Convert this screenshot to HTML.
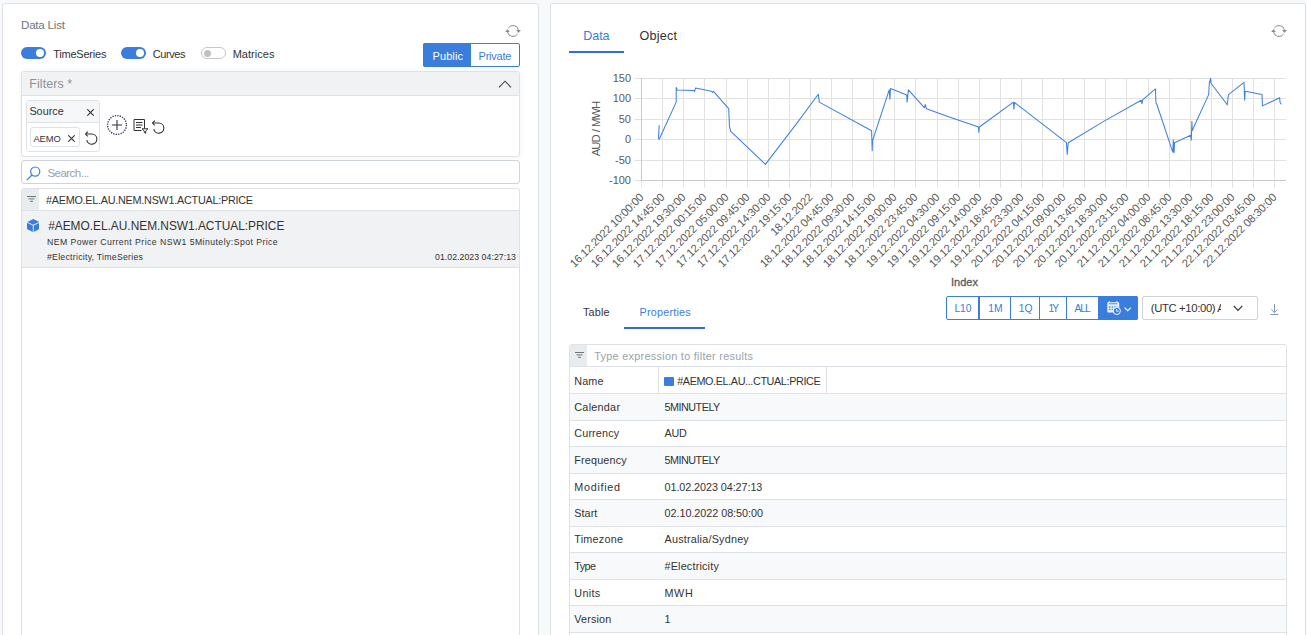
<!DOCTYPE html>
<html><head><meta charset="utf-8"><title>Data List</title>
<style>
html,body{margin:0;padding:0}
body{width:1307px;height:635px;overflow:hidden;background:#f8f9fa;font-family:"Liberation Sans",sans-serif;position:relative}
.b{position:absolute;display:block}
.t{position:absolute;white-space:nowrap}
</style></head><body>
<div class="b" style="left:2px;top:3px;width:537px;height:640px;background:#fff;border:1px solid #dee2e6;border-radius:3px;box-sizing:border-box;"></div>
<div class="b" style="left:550px;top:3px;width:756px;height:640px;background:#fff;border:1px solid #dee2e6;border-radius:3px;box-sizing:border-box;"></div>
<span class="t" style="top:16.00px;font-size:11.6px;line-height:18px;color:#6c757d;letter-spacing:-0.224px;left:21.00px;">Data List</span>
<svg class="b" style="left:503.6px;top:21.85px" width="18" height="18" viewBox="-9 -9 18 18" fill="none" stroke="#868c96" stroke-width="1"><path d="M-4.6 -3.0A5.5 5.5 0 0 1 5.45 -0.8"/><path d="M4.6 3.0A5.5 5.5 0 0 1 -5.45 0.8"/><path d="M3.2 -0.9H7.8L5.5 1.9Z" fill="#868c96" stroke="none"/><path d="M-3.2 0.9H-7.8L-5.5 -1.9Z" fill="#868c96" stroke="none"/></svg>
<div class="b" style="left:21px;top:47px;width:25px;height:12px;background:#3b7ddd;border-radius:6px;"></div>
<div class="b" style="left:36px;top:49px;width:8px;height:8px;background:#fff;border-radius:50%;"></div>
<span class="t" style="top:45.00px;font-size:11px;line-height:18px;color:#333;letter-spacing:-0.224px;left:53.20px;">TimeSeries</span>
<div class="b" style="left:121px;top:47px;width:25px;height:12px;background:#3b7ddd;border-radius:6px;"></div>
<div class="b" style="left:136px;top:49px;width:8px;height:8px;background:#fff;border-radius:50%;"></div>
<span class="t" style="top:45.00px;font-size:11px;line-height:18px;color:#333;letter-spacing:-0.448px;left:152.80px;">Curves</span>
<div class="b" style="left:201px;top:47px;width:25px;height:12px;background:#fff;border:1px solid #c4c8cc;border-radius:6px;box-sizing:border-box;"></div>
<div class="b" style="left:203.5px;top:49.5px;width:7px;height:7px;background:#c0c0c0;border-radius:50%;"></div>
<span class="t" style="top:45.00px;font-size:11px;line-height:18px;color:#333;letter-spacing:0.021px;left:232.70px;">Matrices</span>
<div class="b" style="left:423px;top:43px;width:97px;height:24px;background:#fff;border:1px solid #3b7ddd;border-radius:2px;box-sizing:border-box;"></div>
<div class="b" style="left:423px;top:43px;width:48px;height:24px;background:#3b7ddd;border-radius:2px 0 0 2px;"></div>
<span class="t" style="top:47.00px;font-size:11px;line-height:18px;color:#fff;letter-spacing:0.090px;left:432.50px;">Public</span>
<span class="t" style="top:47.00px;font-size:11px;line-height:18px;color:#3b7ddd;letter-spacing:-0.240px;left:478.60px;">Private</span>
<div class="b" style="left:21px;top:71px;width:499px;height:86px;background:#fff;border:1px solid #dee2e6;border-radius:3px;box-sizing:border-box;box-shadow:0 0 6px rgba(0,0,0,.06);"></div>
<div class="b" style="left:22px;top:72px;width:497px;height:23px;background:#f1f2f4;border-bottom:1px solid #dee2e6;border-radius:2px 2px 0 0;"></div>
<span class="t" style="top:74.00px;font-size:12.4px;line-height:20px;color:#8c929a;letter-spacing:0.095px;left:29.30px;">Filters *</span>
<svg class="b" style="left:498px;top:79px" width="14" height="10" viewBox="0 0 14 10" fill="none" stroke="#444" stroke-width="1.1"><path d="M1 8.3L7 2.2L13 8.3"/></svg>
<div class="b" style="left:26px;top:100px;width:74px;height:52px;background:#fff;border:1px solid #dee2e6;border-radius:3px;box-sizing:border-box;"></div>
<div class="b" style="left:27px;top:101px;width:72px;height:21px;background:#f6f7f8;border-bottom:1px solid #dee2e6;border-radius:2px 2px 0 0;"></div>
<span class="t" style="top:102.00px;font-size:10.8px;line-height:18px;color:#333;letter-spacing:0.018px;left:29.40px;">Source</span>
<svg class="b" style="left:86.6px;top:108.5px" width="7" height="7" viewBox="0 0 7 7" stroke="#333" stroke-width="1.1"><path d="M0.3 0.3L6.7 6.7M6.7 0.3L0.3 6.7"/></svg>
<div class="b" style="left:30px;top:127px;width:50px;height:20px;background:#fff;border:1px solid #dee2e6;border-radius:3px;box-sizing:border-box;"></div>
<span class="t" style="top:130.00px;font-size:9.4px;line-height:17px;color:#333;letter-spacing:-0.061px;left:33.40px;">AEMO</span>
<svg class="b" style="left:67.8px;top:134.7px" width="7" height="7" viewBox="0 0 7 7" stroke="#333" stroke-width="1.1"><path d="M0.3 0.3L6.7 6.7M6.7 0.3L0.3 6.7"/></svg>
<svg class="b" style="left:84.8px;top:130.7px" width="13" height="15" viewBox="0 0 13 15" fill="none" stroke="#333" stroke-width="1.1"><path d="M0.7 3.05H6.8A5.05 5.05 0 1 1 1.85 9.1"/><path d="M2.9 0.65L0.5 3.05L2.7 5.45"/></svg>
<svg class="b" style="left:106px;top:113.5px" width="22" height="22" viewBox="-11 -11 22 22" fill="none" stroke="#2f3350" ><circle r="9.4" stroke-width="1.4" stroke-dasharray="1.25 1.211"/><path d="M-5 0H5M0 -5V5" stroke="#333" stroke-width="1.1"/></svg>
<svg class="b" style="left:133px;top:118px" width="16" height="16" viewBox="0 0 16 16" fill="none" stroke="#333" stroke-width="1"><path d="M1 1.5H11.5V10.5M1 1.5V12.5H8.5M3 4.5H9.5M3 7H9.5M3 9.5H8"/><path d="M9 10.8H15L12.7 13V15.3L11.3 14.6V13Z" /></svg>
<svg class="b" style="left:152px;top:119.5px" width="13" height="15" viewBox="0 0 13 15" fill="none" stroke="#333" stroke-width="1.1"><path d="M0.7 3.05H6.8A5.05 5.05 0 1 1 1.85 9.1"/><path d="M2.9 0.65L0.5 3.05L2.7 5.45"/></svg>
<div class="b" style="left:21px;top:160px;width:499px;height:24px;background:#fff;border:1px solid #ced4da;border-radius:3px;box-sizing:border-box;"></div>
<svg class="b" style="left:25.5px;top:165.5px" width="15" height="15" viewBox="0 0 15 15" fill="none" stroke="#3b7ddd" stroke-width="1.2"><circle cx="9.2" cy="5.6" r="4.6"/><path d="M6 9L0.8 14.2"/></svg>
<span class="t" style="top:164.00px;font-size:11.6px;line-height:18px;color:#9aa1a9;letter-spacing:-0.566px;left:47.40px;">Search...</span>
<div class="b" style="left:21px;top:188px;width:499px;height:460px;background:#fff;border:1px solid #dee2e6;border-radius:3px 3px 0 0;box-sizing:border-box;"></div>
<div class="b" style="left:22px;top:189px;width:17px;height:21px;background:#e9ecef;"></div>
<svg class="b" style="left:27px;top:195.7px" width="9" height="6" viewBox="0 0 9 6" stroke="#70757c" stroke-width="1"><path d="M0 0.5H9M1.5 2.9H7.5M3 5.3H6"/></svg>
<span class="t" style="top:191.00px;font-size:10.8px;line-height:18px;color:#333;letter-spacing:-0.245px;left:46.00px;">#AEMO.EL.AU.NEM.NSW1.ACTUAL:PRICE</span>
<div class="b" style="left:22px;top:210px;width:497px;height:58px;background:#f1f2f4;border-top:1px solid #dee2e6;border-bottom:1px solid #dee2e6;box-sizing:border-box;"></div>
<svg class="b" style="left:26.5px;top:218.5px" width="12.5" height="13" viewBox="0 0 12.5 13"><path d="M6.25 0L12.2 2.9L6.25 5.8L0.3 2.9Z" fill="#3b7ddd"/><path d="M0 3.7L5.8 6.6V13L0 10.1Z" fill="#3b7ddd"/><path d="M12.5 3.7L6.7 6.6V13L12.5 10.1Z" fill="#3b7ddd"/></svg>
<span class="t" style="top:216.00px;font-size:11.9px;line-height:20px;color:#333;letter-spacing:-0.013px;left:48.20px;">#AEMO.EL.AU.NEM.NSW1.ACTUAL:PRICE</span>
<span class="t" style="top:234.00px;font-size:8.7px;line-height:16px;color:#333;letter-spacing:0.441px;left:47.00px;">NEM Power Current Price NSW1 5Minutely:Spot Price</span>
<span class="t" style="top:249.00px;font-size:8.7px;line-height:16px;color:#333;letter-spacing:0.271px;left:47.00px;">#Electricity, TimeSeries</span>
<span class="t" style="top:249.00px;font-size:8.7px;line-height:16px;color:#333;letter-spacing:0.065px;left:435.00px;">01.02.2023 04:27:13</span>
<span class="t" style="top:26.00px;font-size:12.6px;line-height:20px;color:#3b7ddd;letter-spacing:-0.106px;left:583.30px;">Data</span>
<span class="t" style="top:26.00px;font-size:12.6px;line-height:20px;color:#333;letter-spacing:0.177px;left:639.60px;">Object</span>
<div class="b" style="left:569px;top:51px;width:55px;height:2px;background:#2f6fd6;"></div>
<svg class="b" style="left:1269.6px;top:21.85px" width="18" height="18" viewBox="-9 -9 18 18" fill="none" stroke="#868c96" stroke-width="1"><path d="M-4.6 -3.0A5.5 5.5 0 0 1 5.45 -0.8"/><path d="M4.6 3.0A5.5 5.5 0 0 1 -5.45 0.8"/><path d="M3.2 -0.9H7.8L5.5 1.9Z" fill="#868c96" stroke="none"/><path d="M-3.2 0.9H-7.8L-5.5 -1.9Z" fill="#868c96" stroke="none"/></svg>
<span class="t" style="top:303.00px;font-size:10.8px;line-height:18px;color:#333;letter-spacing:0.222px;left:582.90px;">Table</span>
<span class="t" style="top:303.00px;font-size:10.8px;line-height:18px;color:#3b7ddd;letter-spacing:0.209px;left:639.60px;">Properties</span>
<div class="b" style="left:624px;top:327px;width:81px;height:2px;background:#2f6fd6;"></div>
<div class="b" style="left:946px;top:296px;width:192px;height:24px;background:#fff;border:1px solid #3b7ddd;border-radius:2px;box-sizing:border-box;"></div>
<div class="b" style="left:978px;top:296px;width:1px;height:24px;background:#3b7ddd;"></div>
<div class="b" style="left:979px;top:296px;width:1px;height:24px;background:#3b7ddd;"></div>
<div class="b" style="left:1010px;top:296px;width:1px;height:24px;background:#3b7ddd;"></div>
<div class="b" style="left:1039px;top:296px;width:1px;height:24px;background:#3b7ddd;"></div>
<div class="b" style="left:1066px;top:296px;width:1px;height:24px;background:#3b7ddd;"></div>
<div class="b" style="left:1098px;top:296px;width:40px;height:24px;background:#3b7ddd;border-radius:0 2px 2px 0;"></div>
<span class="t" style="top:300.00px;font-size:10.3px;line-height:17px;color:#3b7ddd;letter-spacing:-0.138px;left:954.50px;">L10</span>
<span class="t" style="top:300.00px;font-size:10.3px;line-height:17px;color:#3b7ddd;letter-spacing:0.183px;left:988.20px;">1M</span>
<span class="t" style="top:300.00px;font-size:10.3px;line-height:17px;color:#3b7ddd;letter-spacing:0.049px;left:1018.80px;">1Q</span>
<span class="t" style="top:300.00px;font-size:10.3px;line-height:17px;color:#3b7ddd;letter-spacing:-2.192px;left:1048.60px;">1Y</span>
<span class="t" style="top:300.00px;font-size:10.3px;line-height:17px;color:#3b7ddd;letter-spacing:-1.017px;left:1074.40px;">ALL</span>
<svg class="b" style="left:1107px;top:301px" width="14" height="14" viewBox="0 0 14 14" fill="none"><path d="M2.3 0.2V2M10 0.2V2" stroke="#fff" stroke-width="1.1"/><rect x="0.3" y="1.3" width="11.9" height="10.2" rx="0.8" fill="#fff" fill-opacity="0.92"/><path d="M1.8 2.8H10.6" stroke="#3b7ddd" stroke-width="0.9"/><path d="M1.8 6H3.6M4.6 6H6.2M7.2 6H8.6M9.4 6H10.6M1.8 8.6H3.6M4.6 8.6H6" stroke="#3b7ddd" stroke-width="1.5" stroke-opacity="0.85"/><circle cx="9.8" cy="9.9" r="3.6" fill="#3b7ddd" stroke="#fff" stroke-width="1"/><path d="M9.6 8V10.2H11.6" stroke="#fff" stroke-width="0.9"/></svg>
<svg class="b" style="left:1123.7px;top:307.3px" width="8" height="5" viewBox="0 0 8 5" fill="none" stroke="#fff" stroke-width="1.1"><path d="M0.6 0.6L3.7 3.7L6.8 0.6"/></svg>
<div class="b" style="left:1142px;top:296px;width:116px;height:24px;background:#fff;border:1px solid #ced4da;border-radius:2px;box-sizing:border-box;"></div>
<div class="b" style="left:1143px;top:297px;width:78.3px;height:22px;overflow:hidden">
<span class="t" style="top:2.00px;font-size:11.3px;line-height:18px;color:#333;left:7.80px;letter-spacing:-0.362px;">(UTC +10:00) A</span>
</div>
<svg class="b" style="left:1233px;top:305px" width="10" height="7" viewBox="0 0 10 7" fill="none" stroke="#333" stroke-width="1.2"><path d="M0.7 0.8L5 5.3L9.3 0.8"/></svg>
<svg class="b" style="left:1269.5px;top:304px" width="9" height="12" viewBox="0 0 9 12" fill="none" stroke="#8896b5" stroke-width="1"><path d="M4.5 0V8.5M1.3 5.5L4.5 8.7L7.7 5.5M0.5 10.5H8.5"/></svg>
<div class="b" style="left:569px;top:344px;width:718px;height:300px;background:#fff;border:1px solid #dee2e6;border-radius:3px 3px 0 0;box-sizing:border-box;"></div>
<div class="b" style="left:570px;top:345px;width:17px;height:21.5px;background:#e9ecef;"></div>
<svg class="b" style="left:574.5px;top:352px" width="9" height="6" viewBox="0 0 9 6" stroke="#70757c" stroke-width="1"><path d="M0 0.5H9M1.5 2.9H7.5M3 5.3H6"/></svg>
<span class="t" style="top:347.00px;font-size:10.8px;line-height:18px;color:#9aa1a9;letter-spacing:0.307px;left:594.30px;">Type expression to filter results</span>
<div class="b" style="left:570px;top:366px;width:716px;height:27px;background:#fff;border-top:1px solid #dee2e6;box-sizing:border-box;"></div>
<span class="t" style="top:372.00px;font-size:10.8px;line-height:18px;color:#333;letter-spacing:0.097px;left:574.30px;">Name</span>
<div class="b" style="left:570px;top:393px;width:716px;height:27px;background:#f8f9fa;border-top:1px solid #dee2e6;box-sizing:border-box;"></div>
<span class="t" style="top:398.00px;font-size:10.8px;line-height:18px;color:#333;letter-spacing:0.268px;left:574.30px;">Calendar</span>
<span class="t" style="top:398.00px;font-size:10.8px;line-height:18px;color:#333;letter-spacing:-0.501px;left:664.50px;">5MINUTELY</span>
<div class="b" style="left:570px;top:420px;width:716px;height:26px;background:#fff;border-top:1px solid #dee2e6;box-sizing:border-box;"></div>
<span class="t" style="top:424.00px;font-size:10.8px;line-height:18px;color:#333;letter-spacing:0.140px;left:574.30px;">Currency</span>
<span class="t" style="top:424.00px;font-size:10.8px;line-height:18px;color:#333;letter-spacing:-0.258px;left:664.50px;">AUD</span>
<div class="b" style="left:570px;top:446px;width:716px;height:27px;background:#f8f9fa;border-top:1px solid #dee2e6;box-sizing:border-box;"></div>
<span class="t" style="top:451.00px;font-size:10.8px;line-height:18px;color:#333;letter-spacing:0.171px;left:574.30px;">Frequency</span>
<span class="t" style="top:451.00px;font-size:10.8px;line-height:18px;color:#333;letter-spacing:-0.501px;left:664.50px;">5MINUTELY</span>
<div class="b" style="left:570px;top:473px;width:716px;height:26px;background:#fff;border-top:1px solid #dee2e6;box-sizing:border-box;"></div>
<span class="t" style="top:478.00px;font-size:10.8px;line-height:18px;color:#333;letter-spacing:0.697px;left:574.30px;">Modified</span>
<span class="t" style="top:478.00px;font-size:10.8px;line-height:18px;color:#333;letter-spacing:-0.066px;left:664.50px;">01.02.2023 04:27:13</span>
<div class="b" style="left:570px;top:499px;width:716px;height:27px;background:#f8f9fa;border-top:1px solid #dee2e6;box-sizing:border-box;"></div>
<span class="t" style="top:504.00px;font-size:10.8px;line-height:18px;color:#333;letter-spacing:0.046px;left:574.30px;">Start</span>
<span class="t" style="top:504.00px;font-size:10.8px;line-height:18px;color:#333;letter-spacing:-0.033px;left:664.50px;">02.10.2022 08:50:00</span>
<div class="b" style="left:570px;top:526px;width:716px;height:26px;background:#fff;border-top:1px solid #dee2e6;box-sizing:border-box;"></div>
<span class="t" style="top:530.00px;font-size:10.8px;line-height:18px;color:#333;letter-spacing:0.228px;left:574.30px;">Timezone</span>
<span class="t" style="top:530.00px;font-size:10.8px;line-height:18px;color:#333;letter-spacing:0.216px;left:664.50px;">Australia/Sydney</span>
<div class="b" style="left:570px;top:552px;width:716px;height:27px;background:#f8f9fa;border-top:1px solid #dee2e6;box-sizing:border-box;"></div>
<span class="t" style="top:557.00px;font-size:10.8px;line-height:18px;color:#333;letter-spacing:-0.536px;left:574.30px;">Type</span>
<span class="t" style="top:557.00px;font-size:10.8px;line-height:18px;color:#333;letter-spacing:0.189px;left:664.50px;">#Electricity</span>
<div class="b" style="left:570px;top:579px;width:716px;height:26px;background:#fff;border-top:1px solid #dee2e6;box-sizing:border-box;"></div>
<span class="t" style="top:584.00px;font-size:10.8px;line-height:18px;color:#333;letter-spacing:0.326px;left:574.30px;">Units</span>
<span class="t" style="top:584.00px;font-size:10.8px;line-height:18px;color:#333;letter-spacing:0.600px;left:664.50px;">MWH</span>
<div class="b" style="left:570px;top:605px;width:716px;height:27px;background:#f8f9fa;border-top:1px solid #dee2e6;box-sizing:border-box;"></div>
<span class="t" style="top:610.00px;font-size:10.8px;line-height:18px;color:#333;letter-spacing:0.147px;left:574.30px;">Version</span>
<span class="t" style="top:610.00px;font-size:10.8px;line-height:18px;color:#333;left:664.50px;">1</span>
<div class="b" style="left:570px;top:632px;width:716px;height:27px;background:#fff;border-top:1px solid #dee2e6;box-sizing:border-box;"></div>
<div class="b" style="left:658px;top:367px;width:1px;height:26px;background:#dee2e6;"></div>
<div class="b" style="left:826px;top:367px;width:1px;height:26px;background:#dee2e6;"></div>
<div class="b" style="left:664px;top:376.5px;width:10px;height:9.5px;background:#3b7ddd;border-radius:1px;"></div>
<span class="t" style="top:372.00px;font-size:10.8px;line-height:18px;color:#333;letter-spacing:-0.373px;left:677.20px;">#AEMO.EL.AU...CTUAL:PRICE</span>
<svg class="b" style="left:0;top:0" width="1307" height="300" viewBox="0 0 1307 300" font-family="Liberation Sans, sans-serif" stroke="none">
<path d="M634.5 78.5H1286" stroke="#e1e1e1" stroke-width="1"/>
<path d="M634.5 98.5H1286" stroke="#e1e1e1" stroke-width="1"/>
<path d="M634.5 119.5H1286" stroke="#e1e1e1" stroke-width="1"/>
<path d="M634.5 139.5H1286" stroke="#e1e1e1" stroke-width="1"/>
<path d="M634.5 160.5H1286" stroke="#e1e1e1" stroke-width="1"/>
<path d="M634.5 180.5H1286" stroke="#e1e1e1" stroke-width="1"/>
<path d="M641.5 78V187.5" stroke="#e1e1e1" stroke-width="1"/>
<path d="M662.5 78V187.5" stroke="#e1e1e1" stroke-width="1"/>
<path d="M683.5 78V187.5" stroke="#e1e1e1" stroke-width="1"/>
<path d="M704.5 78V187.5" stroke="#e1e1e1" stroke-width="1"/>
<path d="M726.5 78V187.5" stroke="#e1e1e1" stroke-width="1"/>
<path d="M747.5 78V187.5" stroke="#e1e1e1" stroke-width="1"/>
<path d="M768.5 78V187.5" stroke="#e1e1e1" stroke-width="1"/>
<path d="M789.5 78V187.5" stroke="#e1e1e1" stroke-width="1"/>
<path d="M810.5 78V187.5" stroke="#e1e1e1" stroke-width="1"/>
<path d="M831.5 78V187.5" stroke="#e1e1e1" stroke-width="1"/>
<path d="M852.5 78V187.5" stroke="#e1e1e1" stroke-width="1"/>
<path d="M873.5 78V187.5" stroke="#e1e1e1" stroke-width="1"/>
<path d="M894.5 78V187.5" stroke="#e1e1e1" stroke-width="1"/>
<path d="M915.5 78V187.5" stroke="#e1e1e1" stroke-width="1"/>
<path d="M937.5 78V187.5" stroke="#e1e1e1" stroke-width="1"/>
<path d="M958.5 78V187.5" stroke="#e1e1e1" stroke-width="1"/>
<path d="M979.5 78V187.5" stroke="#e1e1e1" stroke-width="1"/>
<path d="M1000.5 78V187.5" stroke="#e1e1e1" stroke-width="1"/>
<path d="M1021.5 78V187.5" stroke="#e1e1e1" stroke-width="1"/>
<path d="M1042.5 78V187.5" stroke="#e1e1e1" stroke-width="1"/>
<path d="M1063.5 78V187.5" stroke="#e1e1e1" stroke-width="1"/>
<path d="M1084.5 78V187.5" stroke="#e1e1e1" stroke-width="1"/>
<path d="M1105.5 78V187.5" stroke="#e1e1e1" stroke-width="1"/>
<path d="M1126.5 78V187.5" stroke="#e1e1e1" stroke-width="1"/>
<path d="M1148.5 78V187.5" stroke="#e1e1e1" stroke-width="1"/>
<path d="M1169.5 78V187.5" stroke="#e1e1e1" stroke-width="1"/>
<path d="M1190.5 78V187.5" stroke="#e1e1e1" stroke-width="1"/>
<path d="M1211.5 78V187.5" stroke="#e1e1e1" stroke-width="1"/>
<path d="M1232.5 78V187.5" stroke="#e1e1e1" stroke-width="1"/>
<path d="M1253.5 78V187.5" stroke="#e1e1e1" stroke-width="1"/>
<path d="M1274.5 78V187.5" stroke="#e1e1e1" stroke-width="1"/>
<path d="M641.5 78V181" stroke="#c8c8c8" stroke-width="1"/>
<path d="M641.0 180.5H1286" stroke="#c8c8c8" stroke-width="1"/>
<text x="631" y="82.46" font-size="11" fill="#5a5a5a" text-anchor="end">150</text>
<text x="631" y="102.46" font-size="11" fill="#5a5a5a" text-anchor="end">100</text>
<text x="631" y="123.46" font-size="11" fill="#5a5a5a" text-anchor="end">50</text>
<text x="631" y="143.46" font-size="11" fill="#5a5a5a" text-anchor="end">0</text>
<text x="631" y="164.46" font-size="11" fill="#5a5a5a" text-anchor="end">-50</text>
<text x="631" y="184.46" font-size="11" fill="#5a5a5a" text-anchor="end">-100</text>
<text transform="translate(599.9,129) rotate(-90)" font-size="11.3" letter-spacing="-1" word-spacing="1" fill="#5a5a5a" text-anchor="middle">AUD / MWH</text>
<text x="964.5" y="286" font-size="11" fill="#5a5a5a" stroke="#5a5a5a" stroke-width="0.3" text-anchor="middle">Index</text>
<text transform="translate(644.30,198.1) rotate(-45)" font-size="11.2" letter-spacing="-0.2" fill="#5a5a5a" text-anchor="end">16.12.2022 10:00:00</text>
<text transform="translate(665.30,198.1) rotate(-45)" font-size="11.2" letter-spacing="-0.2" fill="#5a5a5a" text-anchor="end">16.12.2022 14:45:00</text>
<text transform="translate(686.30,198.1) rotate(-45)" font-size="11.2" letter-spacing="-0.2" fill="#5a5a5a" text-anchor="end">16.12.2022 19:30:00</text>
<text transform="translate(707.30,198.1) rotate(-45)" font-size="11.2" letter-spacing="-0.2" fill="#5a5a5a" text-anchor="end">17.12.2022 00:15:00</text>
<text transform="translate(729.30,198.1) rotate(-45)" font-size="11.2" letter-spacing="-0.2" fill="#5a5a5a" text-anchor="end">17.12.2022 05:00:00</text>
<text transform="translate(750.30,198.1) rotate(-45)" font-size="11.2" letter-spacing="-0.2" fill="#5a5a5a" text-anchor="end">17.12.2022 09:45:00</text>
<text transform="translate(771.30,198.1) rotate(-45)" font-size="11.2" letter-spacing="-0.2" fill="#5a5a5a" text-anchor="end">17.12.2022 14:30:00</text>
<text transform="translate(792.30,198.1) rotate(-45)" font-size="11.2" letter-spacing="-0.2" fill="#5a5a5a" text-anchor="end">17.12.2022 19:15:00</text>
<text transform="translate(813.30,198.1) rotate(-45)" font-size="11.2" letter-spacing="-0.2" fill="#5a5a5a" text-anchor="end">18.12.2022</text>
<text transform="translate(834.30,198.1) rotate(-45)" font-size="11.2" letter-spacing="-0.2" fill="#5a5a5a" text-anchor="end">18.12.2022 04:45:00</text>
<text transform="translate(855.30,198.1) rotate(-45)" font-size="11.2" letter-spacing="-0.2" fill="#5a5a5a" text-anchor="end">18.12.2022 09:30:00</text>
<text transform="translate(876.30,198.1) rotate(-45)" font-size="11.2" letter-spacing="-0.2" fill="#5a5a5a" text-anchor="end">18.12.2022 14:15:00</text>
<text transform="translate(897.30,198.1) rotate(-45)" font-size="11.2" letter-spacing="-0.2" fill="#5a5a5a" text-anchor="end">18.12.2022 19:00:00</text>
<text transform="translate(918.30,198.1) rotate(-45)" font-size="11.2" letter-spacing="-0.2" fill="#5a5a5a" text-anchor="end">18.12.2022 23:45:00</text>
<text transform="translate(940.30,198.1) rotate(-45)" font-size="11.2" letter-spacing="-0.2" fill="#5a5a5a" text-anchor="end">19.12.2022 04:30:00</text>
<text transform="translate(961.30,198.1) rotate(-45)" font-size="11.2" letter-spacing="-0.2" fill="#5a5a5a" text-anchor="end">19.12.2022 09:15:00</text>
<text transform="translate(982.30,198.1) rotate(-45)" font-size="11.2" letter-spacing="-0.2" fill="#5a5a5a" text-anchor="end">19.12.2022 14:00:00</text>
<text transform="translate(1003.30,198.1) rotate(-45)" font-size="11.2" letter-spacing="-0.2" fill="#5a5a5a" text-anchor="end">19.12.2022 18:45:00</text>
<text transform="translate(1024.30,198.1) rotate(-45)" font-size="11.2" letter-spacing="-0.2" fill="#5a5a5a" text-anchor="end">19.12.2022 23:30:00</text>
<text transform="translate(1045.30,198.1) rotate(-45)" font-size="11.2" letter-spacing="-0.2" fill="#5a5a5a" text-anchor="end">20.12.2022 04:15:00</text>
<text transform="translate(1066.30,198.1) rotate(-45)" font-size="11.2" letter-spacing="-0.2" fill="#5a5a5a" text-anchor="end">20.12.2022 09:00:00</text>
<text transform="translate(1087.30,198.1) rotate(-45)" font-size="11.2" letter-spacing="-0.2" fill="#5a5a5a" text-anchor="end">20.12.2022 13:45:00</text>
<text transform="translate(1108.30,198.1) rotate(-45)" font-size="11.2" letter-spacing="-0.2" fill="#5a5a5a" text-anchor="end">20.12.2022 18:30:00</text>
<text transform="translate(1129.30,198.1) rotate(-45)" font-size="11.2" letter-spacing="-0.2" fill="#5a5a5a" text-anchor="end">20.12.2022 23:15:00</text>
<text transform="translate(1151.30,198.1) rotate(-45)" font-size="11.2" letter-spacing="-0.2" fill="#5a5a5a" text-anchor="end">21.12.2022 04:00:00</text>
<text transform="translate(1172.30,198.1) rotate(-45)" font-size="11.2" letter-spacing="-0.2" fill="#5a5a5a" text-anchor="end">21.12.2022 08:45:00</text>
<text transform="translate(1193.30,198.1) rotate(-45)" font-size="11.2" letter-spacing="-0.2" fill="#5a5a5a" text-anchor="end">21.12.2022 13:30:00</text>
<text transform="translate(1214.30,198.1) rotate(-45)" font-size="11.2" letter-spacing="-0.2" fill="#5a5a5a" text-anchor="end">21.12.2022 18:15:00</text>
<text transform="translate(1235.30,198.1) rotate(-45)" font-size="11.2" letter-spacing="-0.2" fill="#5a5a5a" text-anchor="end">21.12.2022 23:00:00</text>
<text transform="translate(1256.30,198.1) rotate(-45)" font-size="11.2" letter-spacing="-0.2" fill="#5a5a5a" text-anchor="end">22.12.2022 03:45:00</text>
<text transform="translate(1277.30,198.1) rotate(-45)" font-size="11.2" letter-spacing="-0.2" fill="#5a5a5a" text-anchor="end">22.12.2022 08:30:00</text>
<path d="M659.2 125.3 L658.5 138 L659.2 139.3 L676.2 102.1 L676.2 87.4 L677.2 90 L694 90.4 L694.4 91.6 L695.5 88.1 L711.6 91.3 L712.5 92.5 L713.4 91.3 L728.7 108.7 L729.5 126.7 L730.8 131.4 L765.4 164.4 L796 124.4 L818.3 94.2 L819.3 102.1 L871.6 130.8 L872.2 150.8 L872.5 140.8 L889.2 89.8 L889.9 99.3 L890.5 88.5 L906.7 94.9 L907.1 102.1 L908.4 89.8 L924.5 107.8 L925.2 104.4 L926.4 108.7 L950 117.2 L978.6 127 L978.8 132.3 L979.4 127 L1013.4 102.1 L1013.9 109.3 L1014.5 102.5 L1066.5 142.7 L1067.2 154.4 L1068.2 142.7 L1105 120.6 L1141.2 100.2 L1142 103.6 L1142.7 99.9 L1155.4 88.9 L1156 103.1 L1156.7 104 L1172.8 152.2 L1173.3 139.9 L1174.1 152.8 L1174.5 142.8 L1190.7 135.2 L1191.3 140.3 L1191.9 121.4 L1192.2 130.5 L1208.7 94.6 L1209.3 83.2 L1210.6 78.5 L1211 83.2 L1226.7 104 L1227.2 105 L1228.5 94.6 L1244 82.3 L1244.6 100.2 L1245.2 91.2 L1262 94.6 L1262.4 105.9 L1279.6 97.8 L1280.1 102.5 L1281.5 104.4" fill="none" stroke="#3e80e0" stroke-width="1.05" stroke-linejoin="round"/>
</svg>
</body></html>
